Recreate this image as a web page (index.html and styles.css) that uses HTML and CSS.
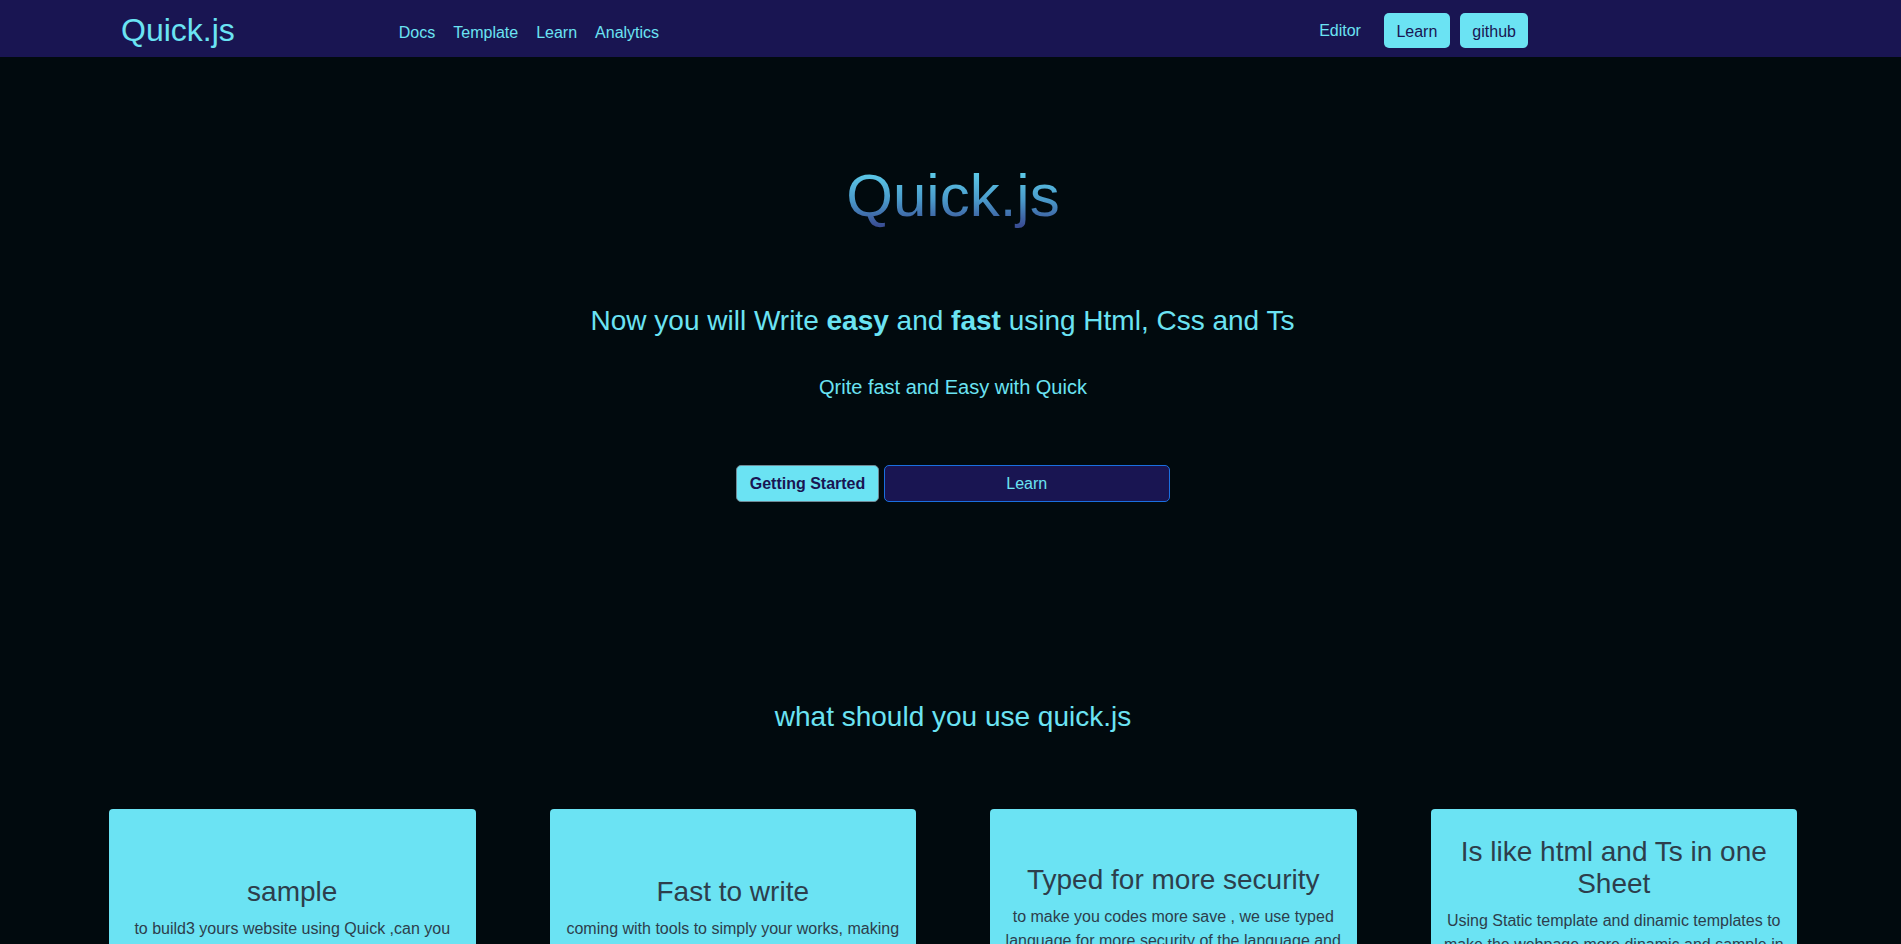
FILE: index.html
```html
<!DOCTYPE html>
<html lang="en">
<head>
<meta charset="utf-8">
<title>Quick.js</title>
<link rel="stylesheet" href="styles.css">
</head>
<body>
<header class="topbar">
  <a class="brand" href="#">Quick.js</a>
  <nav class="links">
    <a href="#">Docs</a>
    <a href="#">Template</a>
    <a href="#">Learn</a>
    <a href="#">Analytics</a>
  </nav>
  <div class="actions">
    <a class="editor" href="#">Editor</a>
    <a class="pill" href="#">Learn</a>
    <a class="pill" href="#">github</a>
  </div>
</header>
<main class="page">
  <section class="hero">
    <h1 class="hero-title">Quick.js</h1>
    <h2 class="hero-sub">Now you will Write <b>easy</b> and <b>fast</b> using Html, Css and Ts</h2>
    <p class="hero-tag">Qrite fast and Easy with Quick</p>
    <div class="hero-buttons">
      <button class="btn-start">Getting Started</button>
      <button class="btn-learn">Learn</button>
    </div>
  </section>
  <section class="why">
    <h2 class="why-title">what should you use quick.js</h2>
    <div class="cards">
      <article class="card">
        <h3>sample</h3>
        <p>to build3 yours website using Quick ,can you create your pages faster than ever before, with a simple syntax.</p>
      </article>
      <article class="card">
        <h3>Fast to write</h3>
        <p>coming with tools to simply your works, making components and pages in only a few lines of code.</p>
      </article>
      <article class="card">
        <h3>Typed for more security</h3>
        <p>to make you codes more save , we use typed language for more security of the language and your code, so the errors are found before you run the app.</p>
      </article>
      <article class="card">
        <h3>Is like html and Ts in one Sheet</h3>
        <p>Using Static template and dinamic templates to make the webpage more dinamic and sample in only one file, writing the html and the typescript together in the same sheet, so you can build and read your pages very easily.</p>
      </article>
    </div>
  </section>
</main>
</body>
</html>
```
FILE: styles.css
```css
html, body {
  margin: 0;
  padding: 0;
}
body {
  background: #010a0e;
  font-family: "Liberation Sans", Arial, sans-serif;
  color: #6be3f3;
}
a {
  text-decoration: none;
  color: inherit;
}

.topbar {
  display: flex;
  align-items: center;
  height: 57px;
  padding-left: 121px;
  background: #191552;
}
.brand {
  font-size: 32px;
  line-height: 36px;
  color: #6be3f3;
  margin-top: 3px;
}
.links {
  display: flex;
  gap: 18px;
  margin-left: 164px;
  margin-top: 9px;
  font-size: 16px;
  line-height: 20px;
}
.links a {
  color: #6be3f3;
}
.actions {
  display: flex;
  align-items: center;
  margin-left: 660px;
  margin-top: 3px;
}
.editor {
  font-size: 16px;
  line-height: 20px;
  margin-right: 23px;
  margin-top: 2px;
}
.pill {
  display: flex;
  align-items: center;
  height: 35px;
  padding: 3px 12.5px 0;
  margin-right: 10px;
  background: #6be3f3;
  color: #191552;
  border-radius: 5px;
  font-size: 16px;
  box-sizing: border-box;
}

.page {
  padding-left: 5px;
  padding-bottom: 40px;
}
.hero {
  display: flex;
  flex-direction: column;
  align-items: center;
  padding-top: 104px;
}
.hero-title {
  margin: 0;
  font-size: 60px;
  line-height: 70px;
  font-weight: normal;
  background: linear-gradient(180deg, #5fd0ec 12%, #4a9bcb 55%, #3a4f95 92%);
  -webkit-background-clip: text;
  background-clip: text;
  color: transparent;
}
.hero-sub {
  margin: 74px 0 0;
  padding-right: 21px;
  font-size: 28px;
  line-height: 32px;
  font-weight: normal;
  color: #6be3f3;
}
.hero-sub b {
  font-weight: bold;
}
.hero-tag {
  margin: 38px 0 0;
  font-size: 20px;
  line-height: 24px;
  color: #6be3f3;
}
.hero-buttons {
  display: flex;
  gap: 5px;
  margin-top: 66px;
}
.hero-buttons button {
  font-family: "Liberation Sans", Arial, sans-serif;
  font-size: 16px;
  height: 37px;
  border-radius: 5px;
  cursor: pointer;
  box-sizing: border-box;
}
.btn-start {
  padding: 0 12.5px;
  background: #6be3f3;
  border: 1px solid #6f8a96;
  color: #191552;
  font-weight: bold;
}
.btn-learn {
  width: 286px;
  background: #191552;
  border: 1px solid #1a6fe0;
  color: #6be3f3;
}

.why {
  display: flex;
  flex-direction: column;
  align-items: center;
  margin-top: 199px;
}
.why-title {
  margin: 0;
  font-size: 28px;
  line-height: 32px;
  font-weight: normal;
  color: #6be3f3;
}
.cards {
  display: grid;
  grid-template-columns: repeat(4, 366.5px);
  column-gap: 74px;
  margin-top: 76px;
}
.card {
  height: 246px;
  box-sizing: border-box;
  padding: 0 12px;
  background: #6be3f3;
  border-radius: 4px;
  color: #2d3e4c;
  display: flex;
  flex-direction: column;
  justify-content: center;
  text-align: center;
}
.card h3 {
  margin: 0 0 9px;
  font-size: 28px;
  line-height: 32px;
  font-weight: normal;
}
.card p {
  margin: 0;
  font-size: 16px;
  line-height: 24px;
}
```
